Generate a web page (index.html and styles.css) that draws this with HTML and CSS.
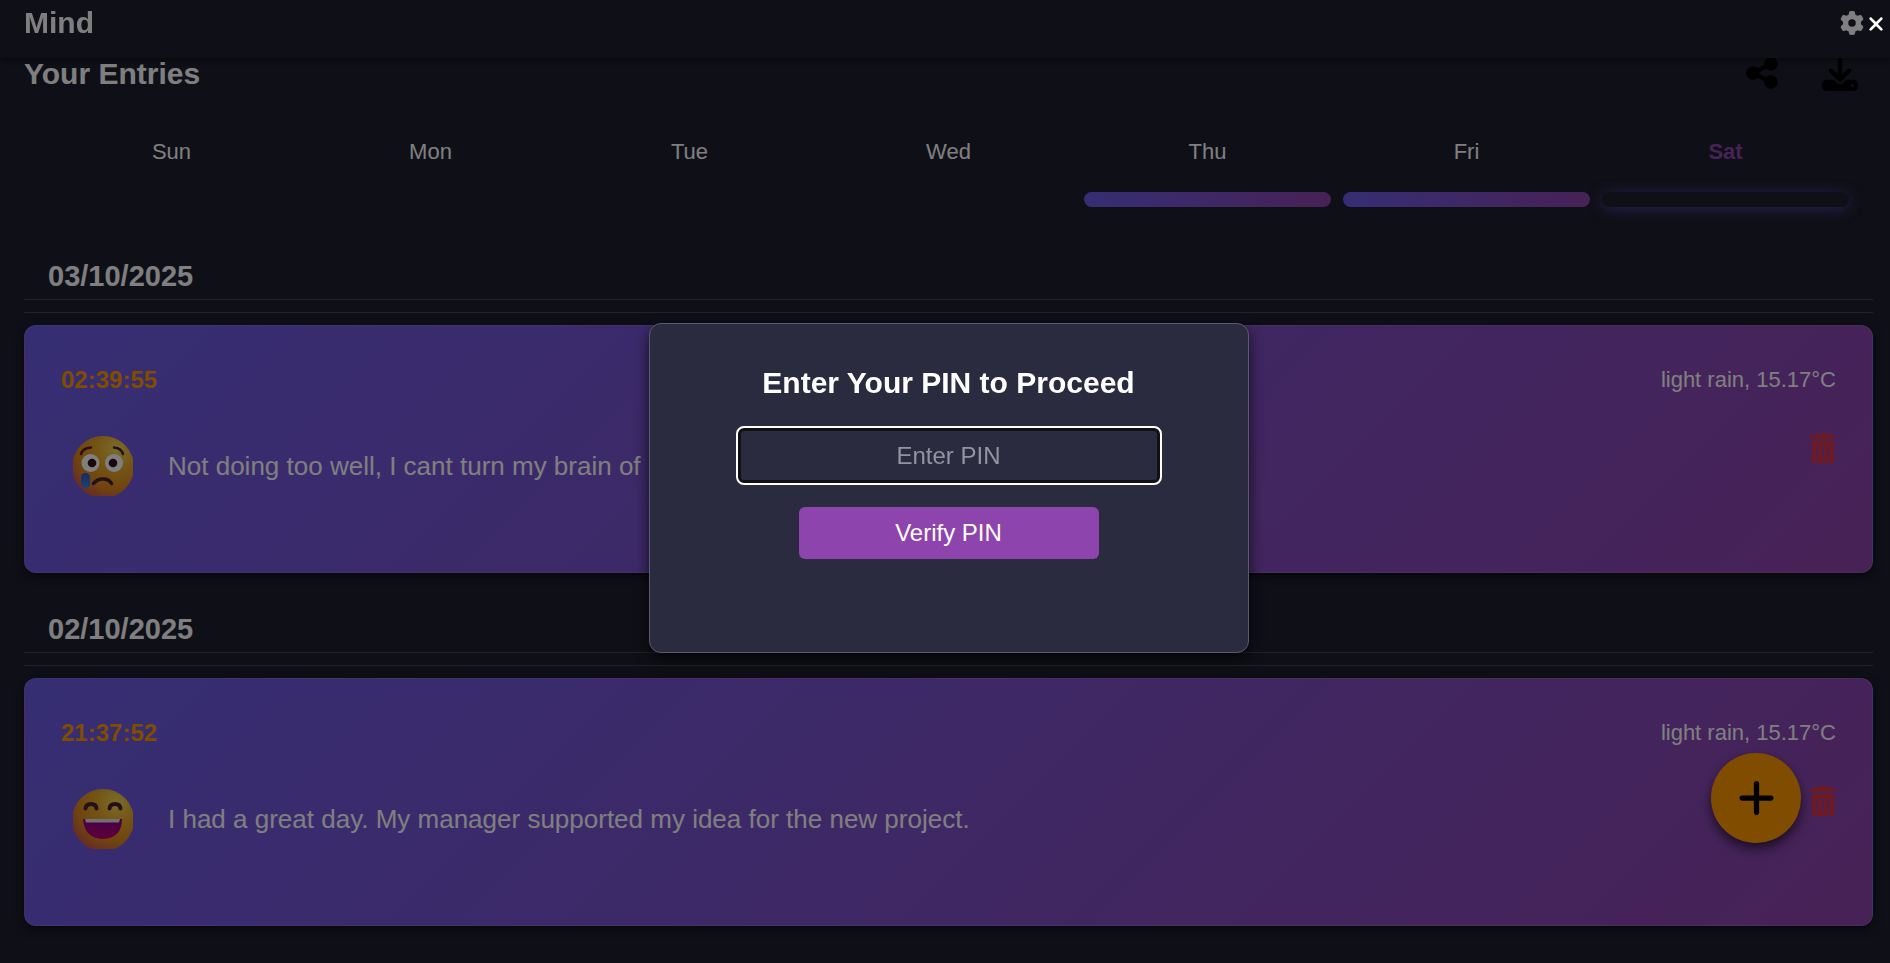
FILE: index.html
```html
<!DOCTYPE html>
<html lang="en">
<head>
<meta charset="utf-8">
<meta name="viewport" content="width=device-width, initial-scale=1">
<title>Mind</title>
<link rel="stylesheet" href="styles.css">
</head>
<body>
<svg class="defs" aria-hidden="true">
  <defs>
    <radialGradient id="face" cx="0.72" cy="0.22" r="0.9">
      <stop offset="0" stop-color="#f5d855"/>
      <stop offset="0.35" stop-color="#e8ab2b"/>
      <stop offset="0.7" stop-color="#e08a20"/>
      <stop offset="1" stop-color="#c8504e"/>
    </radialGradient>
    <linearGradient id="tear" x1="0" y1="0" x2="0" y2="1">
      <stop offset="0" stop-color="#2f58c0"/>
      <stop offset="1" stop-color="#3f80f0"/>
    </linearGradient>
    <linearGradient id="mouth" x1="0" y1="0" x2="0" y2="1">
      <stop offset="0" stop-color="#8a0090"/>
      <stop offset="1" stop-color="#c00070"/>
    </linearGradient>
    <symbol id="trash" viewBox="0 0 448 512">
      <path d="M135.2 17.7C140.6 6.8 151.7 0 163.8 0H284.2c12.1 0 23.2 6.8 28.6 17.7L320 32h96c17.7 0 32 14.3 32 32s-14.3 32-32 32H32C14.3 96 0 81.7 0 64S14.3 32 32 32h96l7.2-14.3zM32 128H416V448c0 35.3-28.7 64-64 64H96c-35.3 0-64-28.7-64-64V128zm96 64c-8.8 0-16 7.2-16 16V432c0 8.8 7.2 16 16 16s16-7.2 16-16V208c0-8.8-7.2-16-16-16zm96 0c-8.8 0-16 7.2-16 16V432c0 8.8 7.2 16 16 16s16-7.2 16-16V208c0-8.8-7.2-16-16-16zm96 0c-8.8 0-16 7.2-16 16V432c0 8.8 7.2 16 16 16s16-7.2 16-16V208c0-8.8-7.2-16-16-16z"/>
    </symbol>
  </defs>
</svg>

<header class="topbar">
  <h1 class="heading">Mind</h1>
  <button class="icon-button topbar-settings" aria-label="Settings">
    <svg class="icon-gear" viewBox="0 0 512 512"><path d="M495.9 166.6c3.2 8.7 .5 18.4-6.4 24.6l-43.3 39.4c1.1 8.3 1.7 16.8 1.7 25.4s-.6 17.1-1.7 25.4l43.3 39.4c6.9 6.2 9.6 15.9 6.4 24.6c-4.4 11.9-9.7 23.3-15.8 34.3l-4.7 8.1c-6.6 11-14 21.4-22.1 31.2c-5.9 7.2-15.7 9.6-24.5 6.8l-55.7-17.7c-13.4 10.3-28.2 18.9-44 25.4l-12.5 57.1c-2 9.1-9 16.3-18.2 17.8c-13.8 2.3-28 3.5-42.5 3.5s-28.7-1.2-42.5-3.5c-9.2-1.5-16.2-8.7-18.2-17.8l-12.5-57.1c-15.8-6.5-30.6-15.1-44-25.4L83.1 425.9c-8.8 2.8-18.6 .3-24.5-6.8c-8.1-9.8-15.5-20.2-22.1-31.2l-4.7-8.1c-6.1-11-11.4-22.4-15.8-34.3c-3.2-8.7-.5-18.4 6.4-24.6l43.3-39.4C64.6 273.1 64 264.6 64 256s.6-17.1 1.7-25.4L22.4 191.2c-6.9-6.2-9.6-15.9-6.4-24.6c4.4-11.9 9.7-23.3 15.8-34.3l4.7-8.1c6.6-11 14-21.4 22.1-31.2c5.9-7.2 15.7-9.6 24.5-6.8l55.7 17.7c13.4-10.3 28.2-18.9 44-25.4l12.5-57.1c2-9.1 9-16.3 18.2-17.8C227.3 1.2 241.5 0 256 0s28.7 1.2 42.5 3.5c9.2 1.5 16.2 8.7 18.2 17.8l12.5 57.1c15.8 6.5 30.6 15.1 44 25.4l55.7-17.7c8.8-2.8 18.6-.3 24.5 6.8c8.1 9.8 15.5 20.2 22.1 31.2l4.7 8.1c6.1 11 11.4 22.4 15.8 34.3zM256 336a80 80 0 1 0 0-160 80 80 0 1 0 0 160z"/></svg>
  </button>
</header>

<main class="page">
  <div class="title-row">
    <h2 class="heading">Your Entries</h2>
    <div class="title-actions">
      <button class="icon-button" aria-label="Share">
        <svg class="icon-share" viewBox="0 0 448 512"><path d="M352 224c53 0 96-43 96-96s-43-96-96-96s-96 43-96 96c0 4 .2 8 .7 11.9l-94.1 47C145.4 170.2 121.9 160 96 160c-53 0-96 43-96 96s43 96 96 96c25.9 0 49.4-10.2 66.6-26.9l94.1 47c-.5 3.9-.7 7.8-.7 11.9c0 53 43 96 96 96s96-43 96-96s-43-96-96-96c-25.9 0-49.4 10.2-66.6 26.9l-94.1-47c.5-3.9 .7-7.8 .7-11.9s-.2-8-.7-11.9l94.1-47C302.6 213.8 326.1 224 352 224z"/></svg>
      </button>
      <button class="icon-button" aria-label="Download">
        <svg class="icon-download" viewBox="0 0 512 512"><path d="M288 32c0-17.7-14.3-32-32-32s-32 14.3-32 32V274.7l-73.4-73.4c-12.5-12.5-32.8-12.5-45.3 0s-12.5 32.8 0 45.3l128 128c12.5 12.5 32.8 12.5 45.3 0l128-128c12.5-12.5 12.5-32.8 0-45.3s-32.8-12.5-45.3 0L288 274.7V32zM64 352c-35.3 0-64 28.7-64 64v32c0 35.3 28.7 64 64 64H448c35.3 0 64-28.7 64-64V416c0-35.3-28.7-64-64-64H346.5l-45.3 45.3c-25 25-65.5 25-90.5 0L165.5 352H64zm368 56a24 24 0 1 1 0 48 24 24 0 1 1 0-48z"/></svg>
      </button>
    </div>
  </div>

  <section class="week" aria-label="This week">
    <div class="day"><span>Sun</span><div class="day-bar"></div></div>
    <div class="day"><span>Mon</span><div class="day-bar"></div></div>
    <div class="day"><span>Tue</span><div class="day-bar"></div></div>
    <div class="day"><span>Wed</span><div class="day-bar"></div></div>
    <div class="day"><span>Thu</span><div class="day-bar day-bar-filled"></div></div>
    <div class="day"><span>Fri</span><div class="day-bar day-bar-filled"></div></div>
    <div class="day day-today"><span>Sat</span><div class="day-bar"></div></div>
  </section>

  <section class="entry-group">
    <h3 class="entry-date">03/10/2025</h3>
    <article class="card">
      <div class="card-head">
        <time class="card-time">02:39:55</time>
        <span class="card-weather">light rain, 15.17°C</span>
      </div>
      <div class="card-body">
        <svg class="mood" viewBox="0 0 60 60" role="img" aria-label="Crying face">
          <circle cx="30" cy="31" r="31" fill="url(#face)"/>
          <path d="M8 18Q10 12 18 11.5M41 11.5Q48 12 50 18" fill="none" stroke="#4a2130" stroke-width="2.5" stroke-linecap="round"/>
          <circle cx="17.5" cy="27" r="9" fill="#fff"/><circle cx="41" cy="27" r="9" fill="#fff"/>
          <circle cx="19" cy="27" r="4.3" fill="#33131f"/><circle cx="40" cy="27" r="4.3" fill="#33131f"/>
          <path d="M20.500 47.500Q24 43 30 43T38.500 47.500" fill="none" stroke="#4a2130" stroke-width="3.5" stroke-linecap="round"/>
          <rect x="8" y="37" width="9" height="15" rx="4.5" fill="url(#tear)"/>
        </svg>
        <p class="card-text">Not doing too well, I cant turn my brain of</p>
        <button class="icon-button card-delete" aria-label="Delete entry"><svg class="icon-trash"><use href="#trash"/></svg></button>
      </div>
    </article>
  </section>

  <section class="entry-group">
    <h3 class="entry-date">02/10/2025</h3>
    <article class="card">
      <div class="card-head">
        <time class="card-time">21:37:52</time>
        <span class="card-weather">light rain, 15.17°C</span>
      </div>
      <div class="card-body">
        <svg class="mood" viewBox="0 0 60 60" role="img" aria-label="Laughing face">
          <circle cx="30" cy="31" r="31" fill="url(#face)"/>
          <path d="M12.500 19.500Q13 15 18 15T23.500 19.500M36.500 19.500Q37 15 42 15T47.500 19.500" fill="none" stroke="#4a2130" stroke-width="4" stroke-linecap="round"/>
          <path d="M10 30H49Q49 49 30 50Q11 49 10 30z" fill="url(#mouth)"/>
          <path d="M12 30H47L46 33.500H13z" fill="#e8dcea"/>
        </svg>
        <p class="card-text">I had a great day. My manager supported my idea for the new project.</p>
        <button class="icon-button card-delete" aria-label="Delete entry"><svg class="icon-trash"><use href="#trash"/></svg></button>
      </div>
    </article>
  </section>
</main>

<button class="fab" aria-label="New entry">
  <svg class="icon-plus" viewBox="0 0 448 512"><path d="M256 80c0-17.7-14.3-32-32-32s-32 14.3-32 32V224H48c-17.7 0-32 14.3-32 32s14.3 32 32 32H192V432c0 17.7 14.3 32 32 32s32-14.3 32-32V288H400c17.7 0 32-14.3 32-32s-14.3-32-32-32H256V80z"/></svg>
</button>

<div class="overlay">
  <button class="icon-button overlay-close" aria-label="Close">
    <svg class="icon-close" viewBox="0 0 384 512"><path d="M342.6 150.6c12.5-12.5 12.5-32.8 0-45.3s-32.8-12.5-45.3 0L192 210.7 86.6 105.4c-12.5-12.5-32.8-12.5-45.3 0s-12.5 32.8 0 45.3L146.7 256 41.4 361.4c-12.5 12.5-12.5 32.8 0 45.3s32.8 12.5 45.3 0L192 301.3 297.4 406.6c12.5 12.5 32.8 12.5 45.3 0s12.5-32.8 0-45.3L237.3 256 342.6 150.6z"/></svg>
  </button>
  <form class="dialog" role="dialog" aria-labelledby="pin-title">
    <h2 class="heading" id="pin-title">Enter Your PIN to Proceed</h2>
    <input class="pin-input" type="password" placeholder="Enter PIN" aria-labelledby="pin-title">
    <button class="pin-submit" type="button">Verify PIN</button>
  </form>
</div>
</body>
</html>
```
FILE: styles.css
```css
* {
  box-sizing: border-box;
}

body {
  margin: 0;
  min-height: 100vh;
  background: #1e1e2e;
  color: #fff;
  font-family: "Liberation Sans", Arial, sans-serif;
}

h1, h2, h3, p {
  margin: 0;
}

button, input {
  font: inherit;
}

svg {
  display: block;
  fill: currentColor;
}

.defs {
  position: absolute;
  width: 0;
  height: 0;
}

.heading {
  font-size: 30px;
  line-height: 38px;
  font-weight: bold;
}

.icon-button {
  padding: 0;
  border: 0;
  background: none;
  color: inherit;
  cursor: pointer;
}

.icon-gear {
  width: 24px;
  height: 24px;
}

.icon-share {
  width: 32px;
  height: 36px;
}

.icon-download {
  width: 36px;
  height: 36px;
}

.icon-trash {
  width: 26px;
  height: 30px;
}

.icon-plus {
  width: 37px;
  height: 42px;
}

.icon-close {
  width: 16px;
  height: 22px;
}

.topbar {
  position: fixed;
  z-index: 1;
  inset: 0 0 auto;
  display: flex;
  align-items: center;
  justify-content: space-between;
  padding: 4px 26px 16px 24px;
  background: #1e1e2e;
  box-shadow: 0 2px 5px rgba(0, 0, 0, 0.5);
}

.page {
  padding: 55px 17px 0 24px;
}

.title-row {
  display: flex;
  align-items: flex-start;
  justify-content: space-between;
}

.title-actions {
  display: flex;
  gap: 44px;
  padding-right: 15px;
  color: #000;
}

.week {
  display: grid;
  grid-template-columns: repeat(7, 1fr);
  gap: 12px;
  padding: 47px 24px 0;
}

.day {
  font-size: 22px;
  line-height: 24px;
  text-align: center;
}

.day-today {
  color: #8e44ad;
  font-weight: bold;
}

.day-bar {
  height: 15px;
  margin-top: 28px;
  border-radius: 8px;
}

.day-bar-filled {
  background: linear-gradient(90deg, #6c5ce7, #8e44ad);
}

.day-today .day-bar {
  box-shadow: 0 2px 14px rgba(108, 92, 231, 0.6);
}

.entry-group {
  margin-top: 44px;
}

.entry-group + .entry-group {
  margin-top: 31px;
}

.entry-date {
  padding: 10px 24px 8px;
  border-bottom: 1px solid #444;
  font-size: 29px;
  line-height: 30px;
}

.card {
  position: relative;
  min-height: 248px;
  margin-top: 25px;
  padding: 36px;
  border: 1px solid rgba(255, 255, 255, 0.1);
  border-radius: 12px;
  background: linear-gradient(135deg, #6c5ce7, #8e44ad);
  box-shadow: 0 3px 8px rgba(0, 0, 0, 0.6);
}

.card::before {
  content: "";
  position: absolute;
  inset: -14px -1px auto;
  border-top: 1px solid #444;
}

.card-head {
  display: flex;
  align-items: center;
  justify-content: space-between;
  line-height: 36px;
}

.card-time {
  color: #ff9900;
  font-size: 24px;
  font-weight: bold;
}

.card-weather {
  font-size: 22px;
}

.card-body {
  display: flex;
  align-items: center;
  min-height: 66px;
  margin-top: 35px;
  padding-left: 12px;
}

.mood {
  width: 60px;
  height: 60px;
}

.card-text {
  flex: 1;
  padding-left: 35px;
  font-size: 26px;
  line-height: 36px;
}

.card-delete {
  align-self: flex-start;
  color: #dc3545;
}

.fab {
  position: fixed;
  right: 89px;
  bottom: 120px;
  display: grid;
  place-items: center;
  width: 90px;
  height: 90px;
  padding: 0;
  border: 0;
  border-radius: 50%;
  background: #ff9900;
  color: #000;
  box-shadow: 0 6px 12px rgba(0, 0, 0, 0.6);
}

.overlay {
  position: fixed;
  z-index: 2;
  inset: 0;
  display: grid;
  place-items: center;
  padding: 13px 0 0 7px;
  background: rgba(0, 0, 0, 0.5);
}

.overlay-close {
  position: absolute;
  top: 13px;
  right: 6px;
}

.dialog {
  display: flex;
  flex-direction: column;
  align-items: center;
  width: 600px;
  padding: 40px 36px 93px;
  border: 1px solid #5a5a6b;
  border-radius: 12px;
  background: #2b2b40;
  box-shadow: 0 6px 15px rgba(0, 0, 0, 0.7);
}

.pin-input {
  width: 422px;
  height: 55px;
  margin-top: 26px;
  padding: 0 12px;
  border: 3px solid #101015;
  border-radius: 6px;
  outline: 2px solid #fff;
  background: transparent;
  color: #fff;
  font-size: 24px;
  text-align: center;
}

.pin-input::placeholder {
  color: #9494a0;
}

.pin-submit {
  width: 300px;
  margin-top: 24px;
  padding: 12px;
  border: 0;
  border-radius: 6px;
  background: #8e44ad;
  color: #fff;
  font-size: 24px;
  line-height: 28px;
}
```
